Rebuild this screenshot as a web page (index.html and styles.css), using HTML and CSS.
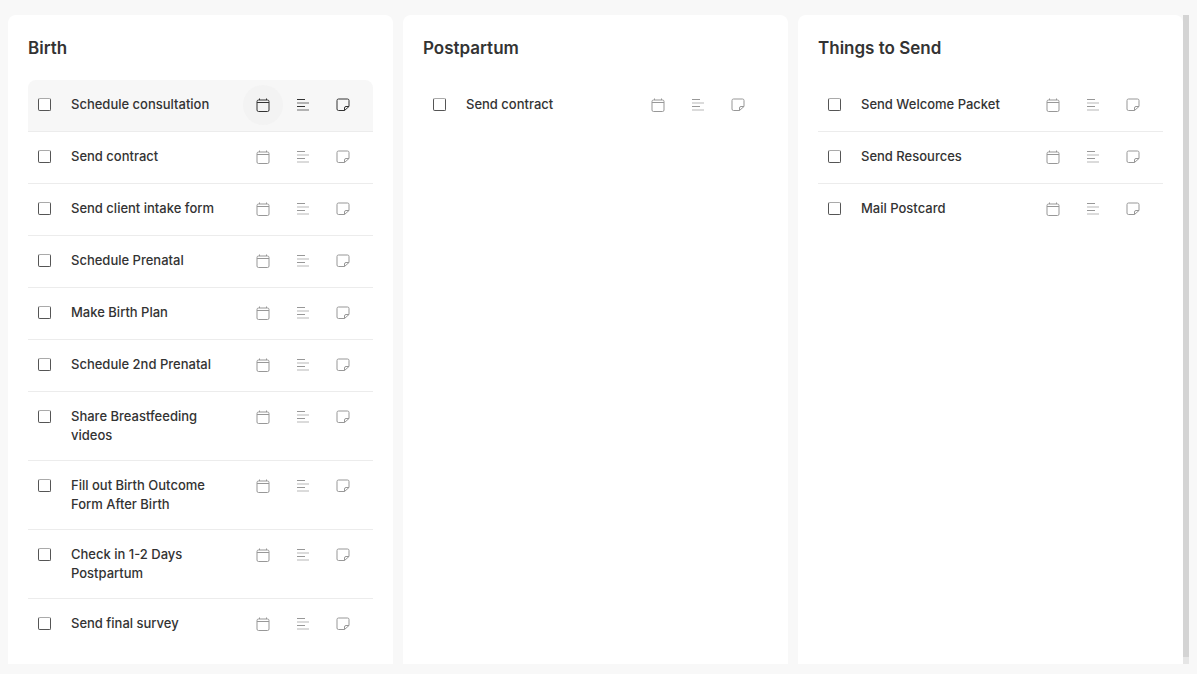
FILE: index.html
```html
<!DOCTYPE html>
<html lang="en">
<head>
    <meta charset="UTF-8">
    <meta name="viewport" content="width=device-width, initial-scale=1.0">
    <title>Tasks</title>
    <link rel="stylesheet" href="styles.css">
</head>
<body>
    <!-- icons used by every task -->
    <svg class="sprite" aria-hidden="true">
        <symbol id="calendar" viewBox="0 0 16 16">
            <rect x="2" y="3" width="12" height="11.5" rx="1.5"/>
            <path d="M2 5.5H14M4.5 1.5V3M11.5 1.5V3"/>
        </symbol>
        <symbol id="lines" viewBox="0 0 16 16">
            <path d="M2 2.5H10M2 9.5H10"/>
            <path class="soft" d="M2 6H14M2 13H14"/>
        </symbol>
        <symbol id="note" viewBox="0 0 16 16">
            <path d="M3.5 2H12.5Q14 2 14 3.5V9.5L9.5 13.5H3.5Q2 13.5 2 12V3.5Q2 2 3.5 2Z"/>
            <path d="M14 9.5H11Q9.5 9.5 9.5 11V13.5"/>
        </symbol>
    </svg>

    <main class="board">
        <div class="columns" id="columns"></div>
        <div class="scrollbar"><div class="thumb"></div></div>
    </main>

    <script>
        let lists = [
            {title: "Birth", tasks: [
                "Schedule consultation",
                "Send contract",
                "Send client intake form",
                "Schedule Prenatal",
                "Make Birth Plan",
                "Schedule 2nd Prenatal",
                "Share Breastfeeding videos",
                "Fill out Birth Outcome Form After Birth",
                "Check in 1-2 Days Postpartum",
                "Send final survey"
            ]},
            {title: "Postpartum", tasks: ["Send contract"]},
            {title: "Things to Send", tasks: ["Send Welcome Packet", "Send Resources", "Mail Postcard"]}
        ]

        function icon_button(icon, label){
            return `<button class="icon-btn" type="button" aria-label="${label}"><svg class="icon"><use href="#${icon}"/></svg></button>`
        }

        //builds one row, the id ties the label to its checkbox
        function task_row(text, id, active){
            return `
            <li class="task${active ? " active" : ""}">
                <input class="check" type="checkbox" id="${id}">
                <label class="name" for="${id}">${text}</label>
                ${icon_button("calendar", "Due date")}
                ${icon_button("lines", "Description")}
                ${icon_button("note", "Note")}
            </li>`
        }

        document.getElementById("columns").innerHTML = lists.map((list, c) => `
            <section class="column">
                <h2 class="title">${list.title}</h2>
                <ul class="tasks">
                    ${list.tasks.map((text, t) => task_row(text, "task-" + c + "-" + t, c == 0 && t == 0)).join("")}
                </ul>
            </section>`).join("")
    </script>
</body>
</html>
```
FILE: styles.css
```css
* {
    box-sizing: border-box;
}

body {
    margin: 0;
    padding: 15px 8px 10px;
    height: 100vh;
    background-color: #f8f8f8;
    color: #333;
    font-family: Inter, "Liberation Sans", sans-serif;
}

.sprite {
    display: none;
}

.board {
    display: flex;
    height: 100%;
}

.columns {
    display: flex;
    flex: 1;
    gap: 10px;
    overflow: hidden;
}

.column {
    flex: 1;
    min-width: 0;
    padding: 20px;
    background-color: #fff;
    border-radius: 8px 8px 0 0;
}

.title {
    margin: 0 0 18px;
    font-size: 17px;
    line-height: 27px;
    font-weight: 600;
}

.tasks {
    margin: 0;
    padding: 0;
    list-style: none;
}

.task {
    display: flex;
    align-items: flex-start;
    min-height: 52px;
    padding: 0 10px;
    border-bottom: 1px solid #ececec;
}

.task:last-child {
    border-bottom: none;
}

.task.active {
    background-color: #f7f7f7;
    border-radius: 8px 8px 0 0;
}

.check {
    appearance: none;
    flex: none;
    width: 13px;
    height: 13px;
    margin: 18px 20px 0 0;
    border: 1px solid #555;
    border-top-color: #aaa;
    border-radius: 2px;
    background-color: #fff;
}

.check:checked {
    background-color: #555;
}

.name {
    flex: 1;
    padding: 15px 20px 15px 0;
    font-size: 13px;
    line-height: 19px;
    font-weight: 500;
}

.icon-btn {
    display: grid;
    place-items: center;
    flex: none;
    width: 40px;
    height: 40px;
    margin-top: 5px;
    padding: 0;
    border: none;
    border-radius: 50%;
    background-color: transparent;
    color: #333;
    cursor: pointer;
}

.active .icon-btn:first-of-type,
.icon-btn:hover {
    background-color: #f3f3f3;
}

.icon {
    width: 16px;
    height: 16px;
    fill: none;
    stroke: currentColor;
    stroke-width: 1;
    opacity: 0.5;
}

.active .icon {
    opacity: 1;
}

.soft {
    stroke-width: 2;
    opacity: 0.35;
}

.scrollbar {
    width: 6px;
    padding-bottom: 7px;
    background-color: #e6e6e6;
}

.thumb {
    height: 100%;
    background-color: #d4d4d4;
}
```
